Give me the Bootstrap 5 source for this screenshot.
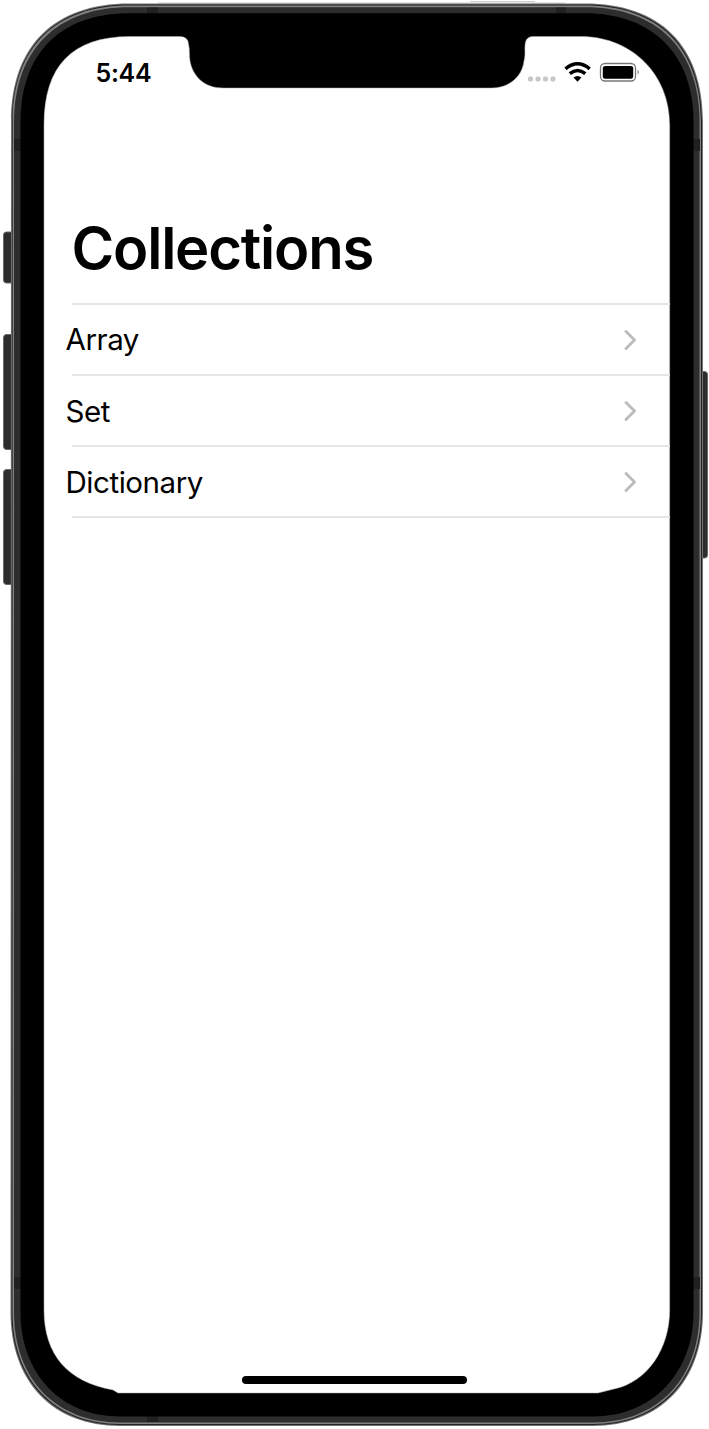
<!DOCTYPE html>
<html lang="en">
<head>
<meta charset="utf-8">
<meta name="viewport" content="width=device-width, initial-scale=1">
<title>Collections</title>
<link rel="stylesheet" href="https://cdn.jsdelivr.net/npm/bootstrap@5.3.0/dist/css/bootstrap.min.css">
<style>
body{font-family:Inter,"Liberation Sans",sans-serif;color:#000;background:#fff}
.phone{width:709px;height:1429px;padding:37px 39px 36px 44px}
.bezel{position:absolute;left:0;top:0;width:709px;height:1429px}
.statusbar{height:50px;padding:21px 29px 0 52px}
.clock{font-size:25px;line-height:30px;font-weight:600;letter-spacing:-.3px;margin-left:-.5px}
.heading{font-size:58px;line-height:70px;font-weight:600;letter-spacing:-1.2px;margin:126px 0 0 27.5px}
.rows{margin-top:20px}
.entry{height:69.1px;padding:0 32px 0 21.5px;font-size:29.5px;letter-spacing:-.45px;color:#000;text-decoration:none}
.rule{height:2px;margin-left:28px;background:#e5e5e5}
.home-bar{width:225px;height:8px;margin-right:5px}
.home-area{padding-bottom:9.500px}
</style>
</head>
<body>
<div class="phone position-relative overflow-hidden d-flex flex-column">
<svg class="bezel" viewBox="0 0 709 1429" aria-hidden="true">
 <g fill="#2c2c2c" stroke="#686868" stroke-width="1">
  <rect x="3.5" y="232" width="14" height="51" rx="3"/><rect x="3.5" y="334.500" width="14" height="115" rx="3"/><rect x="3.500" y="469.500" width="14" height="115" rx="3"/><rect x="694" y="371.500" width="13.500" height="186.500" rx="3"/>
 </g>
 <path d="M158 3H565M470 1.500H535" stroke="#ccc" fill="none"/>
 <path fill="#707070" d="M11 122C11 45 55 3.500 129 3.500H585C660 3.500 703 45 703 122V1312C703 1382 660 1426 593 1426H120C53 1426 10.500 1382 10.500 1312Z"/>
 <path d="M12 122C12 46 56 4.500 129 4.500H585C659 4.500 702 46 702 122V1312C702 1381 659 1425 593 1425H120C54 1425 11.500 1381 11.500 1312Z" fill="#222"/>
 <path d="M12.700 122C12.700 47 56 5.500 129 5.500H585C658 5.500 701 47 701 122V1312C701 1380 658 1424 593 1424H120C55 1424 12.500 1380 12.500 1312Z" fill="#808080"/>
 <path d="M14 122C14 49 58 7.200 129 7.200H585C657 7.200 699.500 49 699.500 122V1312C699.500 1379 657 1422.500 593 1422.500H120C56 1422.500 14 1379 14 1312Z" fill="#2d2d2d"/>
 <path d="M147 7.500H158V14H147ZM556 7.500H566V14H556ZM14 139H21V151H14ZM693 139H700V151H693ZM14 1277H21V1289H14ZM693 1277H700V1289H693ZM147 1416H158V1422H147Z" fill="#202020"/>
 <path d="M20.500 122C20.500 54 60 13.300 129 13.300H585C652 13.300 693.500 54 693.500 122V1312C693.500 1373 652 1416.500 593 1416.500H120C60 1416.500 20.500 1373 20.500 1312Z"/>
 <path d="M44 125C44 66 72 36.500 130 36.500H180Q188 36.500 188.500 44C190 50 189 55 190 61C193 77 205 88 223 88H491C509 88 522 77 524 61C526 54 524 47 525.500 42Q527 36.500 533 36.500H584C632 38 669.700 74 669.700 125V1310C669.700 1348 648 1382 614 1389L598 1393H118L113 1390C68 1382 44 1355 44 1310Z" fill="#fff" stroke="#aaa" stroke-width=".5"/>
</svg>
<header class="statusbar position-relative d-flex justify-content-between align-items-start">
 <span class="clock">5:44</span>
 <svg width="114" height="30" viewBox="527 58 114 30" aria-label="Wi-Fi and battery status">
  <g fill="#c8c8c8"><rect x="528" y="76.500" width="5" height="5" rx="1.700"/><rect x="535.500" y="76.500" width="5" height="5" rx="1.700"/><rect x="543" y="76.500" width="5" height="5" rx="1.700"/><rect x="550.500" y="76.500" width="5" height="5" rx="1.700"/></g>
  <g fill="none" stroke="#000" stroke-width="3.500"><path d="M565.500 68.800Q577.500 58.800 589.700 68.800M569.800 73.700Q577.500 67.300 585.300 73.700"/></g>
  <path d="M573.500 77.600Q577.500 74.500 581.500 77.600L577.500 81.800Z"/>
  <rect x="600.500" y="63.500" width="35" height="17.500" rx="4.500" fill="none" stroke="#777" stroke-width="1.300"/>
  <rect x="602.800" y="66" width="30.400" height="12.700" rx="2.300"/><path d="M637.600 69.500Q640 72.200 637.600 75Z" fill="#777"/>
 </svg>
</header>
<main class="position-relative flex-grow-1">
 <h1 class="heading">Collections</h1>
 <nav class="rows">
  <div class="rule"></div>
  <a class="entry d-flex align-items-center justify-content-between" href="#">Array <svg width="15" height="22" viewBox="0 0 15 22"><path d="M3 2.500L11.500 11L3 19.500" fill="none" stroke="#bcbcbc" stroke-width="2.900" stroke-linecap="round" stroke-linejoin="round"/></svg></a>
  <div class="rule"></div>
  <a class="entry d-flex align-items-center justify-content-between" href="#">Set <svg width="15" height="22" viewBox="0 0 15 22"><path d="M3 2.500L11.500 11L3 19.500" fill="none" stroke="#bcbcbc" stroke-width="2.900" stroke-linecap="round" stroke-linejoin="round"/></svg></a>
  <div class="rule"></div>
  <a class="entry d-flex align-items-center justify-content-between" href="#">Dictionary <svg width="15" height="22" viewBox="0 0 15 22"><path d="M3 2.500L11.500 11L3 19.500" fill="none" stroke="#bcbcbc" stroke-width="2.900" stroke-linecap="round" stroke-linejoin="round"/></svg></a>
  <div class="rule"></div>
 </nav>
</main>
<footer class="home-area position-relative d-flex justify-content-center"><div class="home-bar bg-black rounded-pill"></div></footer>
</div>
<script src="https://cdn.jsdelivr.net/npm/bootstrap@5.3.0/dist/js/bootstrap.bundle.min.js"></script>
</body>
</html>
